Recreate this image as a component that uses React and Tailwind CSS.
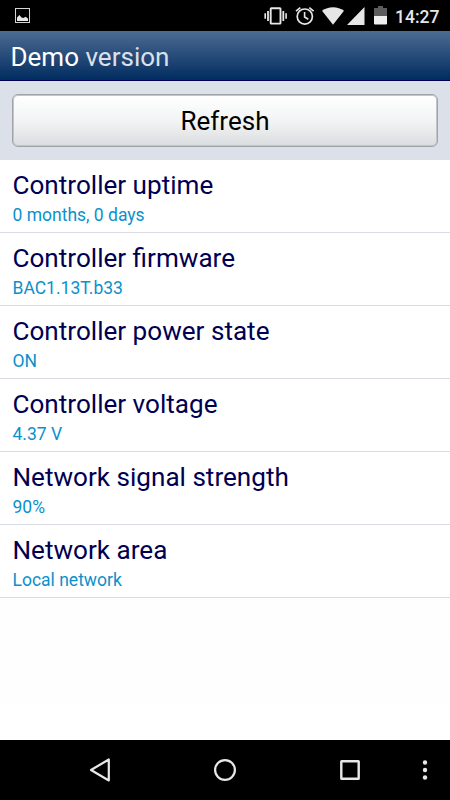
const rows = [
  ['Controller uptime', '0 months, 0 days'],
  ['Controller firmware', 'BAC1.13T.b33'],
  ['Controller power state', 'ON'],
  ['Controller voltage', '4.37 V'],
  ['Network signal strength', '90%'],
  ['Network area', 'Local network'],
];

function StatusBar() {
  return (
    <div className="flex h-[31px] shrink-0 items-center bg-black pr-[9px] pl-[15px] text-[#e6e6e6]">
      <svg width="15" height="15" viewBox="0 0 15 15" fill="none">
        <rect x="0.5" y="0.5" width="14" height="14" stroke="#d4d4d4" />
        <path d="M2 13V9.5L4.5 7L6.5 9.5L8.5 10L10.5 8.7L13 10.5V13Z" fill="#e6e6e6" />
      </svg>
      <div className="ml-auto flex items-center">
        <svg width="24" height="18" viewBox="0 0 24 18" fill="none" stroke="currentColor">
          <rect x="6.7" y="1.2" width="9.8" height="15.4" rx="0.6" strokeWidth="1.9" />
          <path d="M4 4V14M19.3 4V14" strokeWidth="1.8" />
          <path d="M1.2 6.2V11.8M22.1 6.2V11.8" strokeWidth="1.6" />
        </svg>
        <svg className="ml-[7px]" width="20" height="20" viewBox="0 0 20 20" fill="none" stroke="currentColor">
          <circle cx="9.8" cy="10.6" r="7.6" strokeWidth="1.7" />
          <path d="M1 5.2L5.3 1.7M18.6 5.2L14.3 1.7" strokeWidth="1.7" />
          <path d="M9.6 6V11L13.3 13.3" strokeWidth="1.6" />
        </svg>
        <svg className="ml-[7px]" width="22" height="18" viewBox="0 0 22 18" fill="currentColor">
          <path d="M0 3.8Q4.8 0.2 11 0.2T22 3.8L11 17.8Z" />
        </svg>
        <svg className="ml-[3px]" width="18" height="18" viewBox="0 0 18 18" fill="currentColor">
          <path d="M0 18L17.5 0V18Z" />
        </svg>
        <svg className="ml-[9px]" width="13" height="19" viewBox="0 0 13 19">
          <path d="M4 0H9V2H13V10H0V2H4Z" fill="#5c5c5c" />
          <path d="M0 10H13V17.5Q13 18.5 12 18.5H1Q0 18.5 0 17.5Z" fill="#efefef" />
        </svg>
        <span className="ml-[8px] w-[46px] pt-[3px] text-[17.5px] leading-[28px] font-medium whitespace-nowrap">14:27</span>
      </div>
    </div>
  );
}

function NavigationBar() {
  return (
    <nav className="h-[60px] shrink-0 bg-black">
      <svg width="450" height="60" viewBox="0 0 450 60" fill="none" stroke="#e8e8e8">
        <path d="M91 30L108.8 19.5V40.5Z" strokeWidth="2.2" strokeLinejoin="round" />
        <circle cx="225" cy="30" r="9.9" strokeWidth="2.2" />
        <rect x="341.3" y="21.3" width="17.4" height="17.4" rx="0.3" strokeWidth="2.4" strokeLinejoin="round" />
        <g fill="#e8e8e8" stroke="none">
          <circle cx="425" cy="22.5" r="2.2" />
          <circle cx="425" cy="30" r="2.2" />
          <circle cx="425" cy="37.5" r="2.2" />
        </g>
      </svg>
    </nav>
  );
}

export default function App() {
  return (
    <div className="flex h-[800px] w-[450px] flex-col overflow-hidden bg-white font-['Roboto',sans-serif]">
      <StatusBar />
      <header className="h-[50px] shrink-0 border-b border-[#000052] bg-linear-to-b from-[#4b6c93] to-[#002c60] pl-[10.5px] text-[26px] leading-[52px] text-white">
        Demo <span className="text-[#dce0e9]">version</span>
      </header>
      <div className="h-[79px] shrink-0 bg-[#dce0e8] px-[12px] pt-[13px]">
        <button className="block h-[53px] w-full rounded-[6px] border border-[#a0a4a8] bg-linear-to-b from-white via-[#f3f4f5] to-[#dadde0] pt-px text-[26px] leading-[51px] text-black shadow-[inset_0_0_0_1px_#c3c6c9]">
          Refresh
        </button>
      </div>
      <main className="flex-1 bg-linear-to-b from-[#f8f8f8] to-white">
        {rows.map(([title, value]) => (
          <div key={title} className="h-[73px] border-b border-[#d9dce3] bg-white pt-[10px] pl-[12.5px]">
            <div className="text-[26.1px] leading-[31px] text-[#000052]">{title}</div>
            <div className="mt-[4px] text-[17.5px] leading-[20px] text-[#0a91cc]">{value}</div>
          </div>
        ))}
      </main>
      <NavigationBar />
    </div>
  );
}
